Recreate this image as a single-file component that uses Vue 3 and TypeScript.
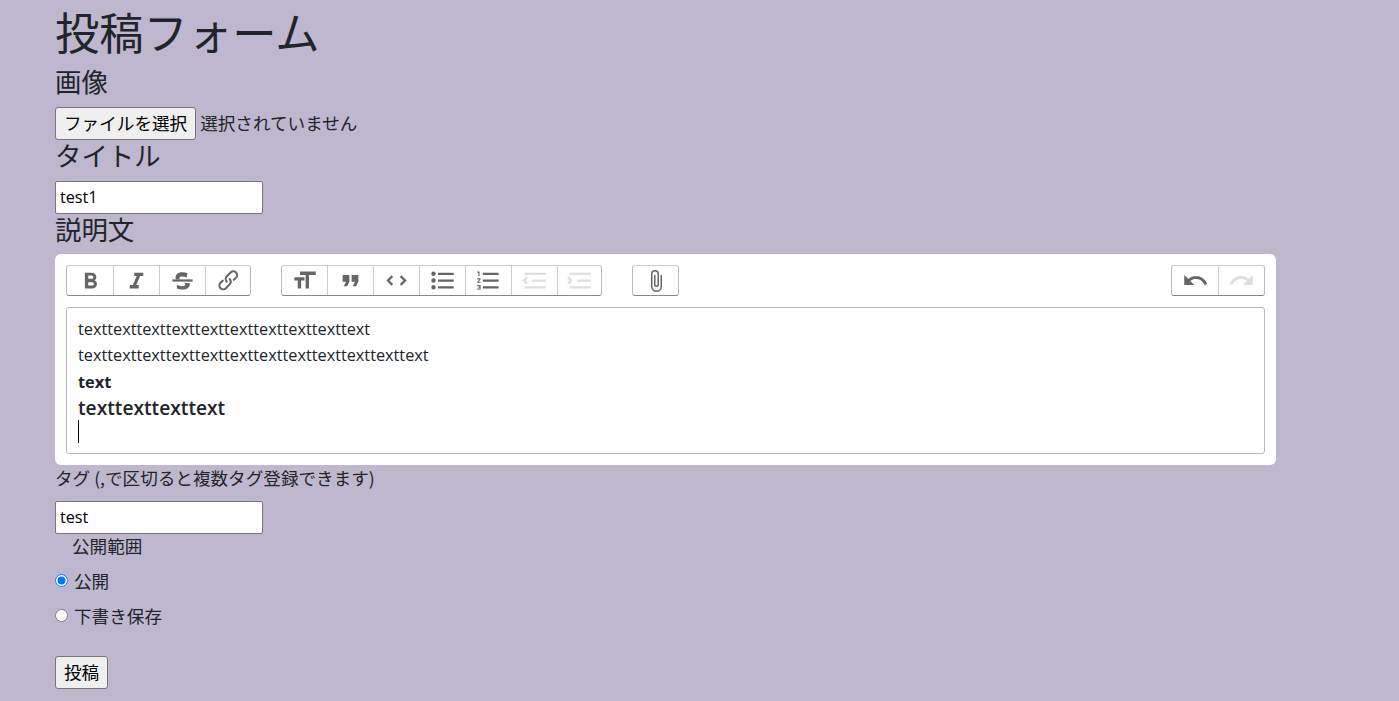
<script setup lang="ts">
type Tool = { paths: string[]; off?: boolean }
const I: Record<string, Tool> = {
  bold: { paths: ['M15.6 11.8c1-.7 1.6-1.8 1.6-2.8a4 4 0 0 0-4-4H7v14h7c2.1 0 3.7-1.7 3.7-3.8 0-1.5-.8-2.8-2.1-3.400zM10 7.500h3a1.500 1.500 0 1 1 0 3h-3v-3zm3.500 9H10v-3h3.500a1.500 1.500 0 1 1 0 3z'] },
  italic: { paths: ['M10 5v3h2.200l-3.400 8H6v3h8v-3h-2.200l3.400-8H18V5h-8z'] },
  strike: { paths: ['M3 13h18v-2H3z', 'M16.500 5.600c-1.400-.6-2.900-.9-4.500-.9-1.900 0-3.400.4-4.500 1.300-1.100.9-1.700 2-1.700 3.400 0 .6.1 1.100.3 1.600h3.900c-.5-.3-.8-.7-.8-1.200 0-.4.2-.8.6-1 .4-.3 1-.4 1.800-.4 1.200 0 2.600.3 4 .9z', 'M13 14c.9.4 1.500.8 1.500 1.500 0 .9-.9 1.500-2.500 1.500-1.500 0-3.200-.4-5-1.300v3.300c1.500.7 3.200 1 5 1 4 0 6.500-1.800 6.500-4.700 0-.3 0-.6-.1-.8z'] },
  link: { paths: ['M9.880 13.700a4.300 4.300 0 0 1 0-6.070l3.370-3.370a4.260 4.260 0 0 1 6.070 0 4.300 4.300 0 0 1 0 6.060l-1.960 1.720a.91.91 0 1 1-1.300-1.300l1.970-1.710a2.460 2.460 0 0 0-3.480-3.480l-3.380 3.370a2.460 2.460 0 0 0 0 3.480.91.91 0 1 1-1.300 1.300z', 'M4.250 19.460a4.300 4.300 0 0 1 0-6.070l1.930-1.900a.91.91 0 1 1 1.300 1.300l-1.930 1.900a2.460 2.460 0 0 0 3.480 3.480l3.370-3.380c.96-.96.96-2.520 0-3.480a.91.91 0 1 1 1.300-1.300 4.300 4.300 0 0 1 0 6.070l-3.380 3.380a4.260 4.260 0 0 1-6.070 0z'] },
  heading: { paths: ['M12 9v3H9v7H6v-7H3V9h9zM8 4h14v3h-6v12h-3V7H8V4z'] },
  quote: { paths: ['M6 17h3l2-4V7H5v6h3zm8 0h3l2-4V7h-6v6h3z'] },
  code: { paths: ['M18.200 12L15 15.200l1.400 1.400L21 12l-4.600-4.600L15 8.800l3.200 3.200zM5.800 12L9 8.800 7.600 7.400 3 12l4.600 4.600L9 15.200 5.800 12z'] },
  bullets: { paths: ['M4 4a2 2 0 1 0 0 4 2 2 0 0 0 0-4zm0 6a2 2 0 1 0 0 4 2 2 0 0 0 0-4zm0 6a2 2 0 1 0 0 4 2 2 0 0 0 0-4zm4 3h14v-2H8v2zm0-6h14v-2H8v2zm0-8v2h14V5H8z'] },
  numbers: { paths: ['M2 17h2v.5H3v1h1v.5H2v1h3v-4H2v1zm1-9h1V4H2v1h1v3zm-1 3h1.800L2 13.100v.9h3v-1H3.200L5 10.900V10H2v1zm5-6v2h14V5H7zm0 14h14v-2H7v2zm0-6h14v-2H7v2z'] },
  outdent: { off: true, paths: ['M3 19h19v-2H3v2zm7-6h12v-2H10v2zm-8.300-.3l2.800 2.900L6 14.200 4 12l2-2-1.400-1.500L1 12l.7.7zM3 5v2h19V5H3z'] },
  indent: { off: true, paths: ['M3 19h19v-2H3v2zm7-6h12v-2H10v2zm-6.900-1L1 14.200l1.400 1.400L6 12l-.7-.7-2.900-2.900L1 9.800 3.100 12zM3 5v2h19V5H3z'] },
  attach: { paths: ['M16.500 6v11.500a4 4 0 1 1-8 0V5a2.500 2.500 0 0 1 5 0v10.500a1 1 0 1 1-2 0V6H10v9.500a2.500 2.500 0 0 0 5 0V5a4 4 0 1 0-8 0v12.500a5.500 5.500 0 0 0 11 0V6h-1.500z'] },
  undo: { paths: ['M12.500 8c-2.600 0-5 1-6.900 2.600L2 7v9h9l-3.600-3.600A8 8 0 0 1 20 16l2.400-.8a10.500 10.500 0 0 0-10-7.200z'] },
  redo: { off: true, paths: ['M18.400 10.600a10.500 10.500 0 0 0-16.900 4.600L4 16a8 8 0 0 1 12.700-3.600L13 16h9V7l-3.600 3.600z'] },
}
const textGroup = [I.bold, I.italic, I.strike, I.link]
const blockGroup = [I.heading, I.quote, I.code, I.bullets, I.numbers, I.outdent, I.indent]
const fileGroup = [I.attach]
const historyGroup = [I.undo, I.redo]
const leftGroups = [
  { name: 'text', tools: textGroup },
  { name: 'block', tools: blockGroup },
  { name: 'file', tools: fileGroup },
]
</script>

<template>
  <form class="page" @submit.prevent>
    <h1 class="title">投稿フォーム</h1>
    <label class="field-label">画像</label>
    <div class="file-row">
      <button type="button" class="native-btn">ファイルを選択</button>
      <span class="file-name">選択されていません</span>
    </div>
    <label class="field-label">タイトル</label>
    <input class="text-input" type="text" value="test1" />
    <label class="field-label last">説明文</label>

    <div class="editor-card">
      <div class="toolbar">
        <div class="left-groups">
          <div v-for="group in leftGroups" :key="group.name" class="group" :class="group.name">
            <span v-for="(tool, i) in group.tools" :key="i" class="tool" :class="{ off: tool.off }">
              <svg viewBox="0 0 24 24"><path v-for="d in tool.paths" :key="d" :d="d" /></svg>
            </span>
          </div>
        </div>
        <div class="group">
          <span v-for="(tool, i) in historyGroup" :key="i" class="tool" :class="{ off: tool.off }">
            <svg viewBox="0 0 24 24"><path v-for="d in tool.paths" :key="d" :d="d" /></svg>
          </span>
        </div>
      </div>
      <div class="editor">
        <div>texttexttexttexttexttexttexttexttexttext</div>
        <div>texttexttexttexttexttexttexttexttexttexttexttext</div>
        <div><strong>text</strong></div>
        <div class="heading">texttexttexttext</div>
        <div class="caret-line"><span class="caret"></span></div>
      </div>
    </div>

    <label class="small-label">タグ (,で区切ると複数タグ登録できます)</label>
    <input class="text-input" type="text" value="test" />
    <div class="scope-label">公開範囲</div>
    <label class="radio-row"><input type="radio" name="scope" checked /><span>公開</span></label>
    <label class="radio-row"><input type="radio" name="scope" /><span>下書き保存</span></label>
    <button type="button" class="native-btn submit">投稿</button>
  </form>
</template>

<style>
html, body { background: #bfb7cd; }
</style>

<style scoped>
.page {
  display: flex;
  flex-direction: column;
  align-items: flex-start;
  height: 701px;
  box-sizing: border-box;
  overflow: hidden;
  padding: 5px 0 0 55px;
  background: #bfb7cd;
  color: #212529;
  font-family: "Noto Sans CJK JP", sans-serif;
  font-size: 17.6px;
}
.title {
  margin: 0;
  height: 61px;
  font-size: 44.3px;
  line-height: 53px;
  font-weight: 400;
}
.field-label {
  display: block;
  height: 33px;
  margin-bottom: 8px;
  font-size: 26.4px;
  line-height: 29px;
}
.field-label.last { margin-bottom: 7px; }
.file-row { display: flex; align-items: flex-start; gap: 4px; }
.file-name { line-height: 31px; }
.native-btn {
  box-sizing: border-box;
  height: 33px;
  padding: 0 8px 2px;
  border: 1px solid #767676;
  border-radius: 3px;
  background: #efefef;
  color: #000;
  font: inherit;
  line-height: 29px;
}
.text-input {
  box-sizing: border-box;
  width: 208px;
  height: 33px;
  padding: 0 4px 2px;
  border: 1px solid #767676;
  border-radius: 2px;
  background: #fff;
  color: #000;
  font-family: "Open Sans", "Noto Sans CJK JP", sans-serif;
  font-size: 16.2px;
}
.editor-card {
  box-sizing: border-box;
  width: 1221px;
  height: 211px;
  padding: 11px;
  border-radius: 6px;
  background: #fff;
}
.toolbar {
  display: flex;
  justify-content: space-between;
  height: 31px;
  margin-bottom: 11px;
}
.left-groups { display: flex; gap: 29px; }
.left-groups .block { margin-left: 1px; }
.left-groups .file { margin-left: 1px; }
.group {
  display: flex;
  height: 31px;
  box-sizing: border-box;
  border: 1px solid #bbb;
  border-top-color: #ccc;
  border-bottom-color: #888;
  border-radius: 3px;
}
.tool {
  display: flex;
  align-items: center;
  justify-content: center;
  width: 46px;
  box-sizing: border-box;
  border-left: 1px solid #ccc;
}
.tool:first-child { border-left: 0; }
.text .tool:last-child { width: 45px; }
.block .tool:first-child { width: 45px; }
.block .tool:last-child { width: 44px; }
.file .tool { width: 45px; }
.tool svg { display: block; flex: none; width: 27px; height: 27px; fill: #000; opacity: 0.6; }
.file .tool svg { width: 24px; height: 24px; }
.tool.off svg { opacity: 0.125; }
.editor {
  box-sizing: border-box;
  height: 147px;
  padding: 8px 11px 0;
  border: 1px solid #bbb;
  border-radius: 3px;
  font-family: "Open Sans", "Noto Sans CJK JP", sans-serif;
  font-size: 16.25px;
  line-height: 26.4px;
}
.editor strong { font-size: 16.4px; font-weight: 700; }
.heading {
  font-size: 19.2px;
  font-weight: 600;
}
.caret-line { height: 26px; }
.caret {
  display: block;
  width: 1px;
  height: 23px;
  margin-top: -2px;
  background: #000;
}
.small-label { display: block; height: 36px; line-height: 26px; }
.scope-label { height: 29px; padding-left: 17px; line-height: 24px; }
.radio-row {
  display: flex;
  align-items: center;
  gap: 6px;
  height: 35px;
}
.radio-row input { margin: 0; width: 13px; height: 13px; }
.submit { margin-top: 23px; }
</style>
